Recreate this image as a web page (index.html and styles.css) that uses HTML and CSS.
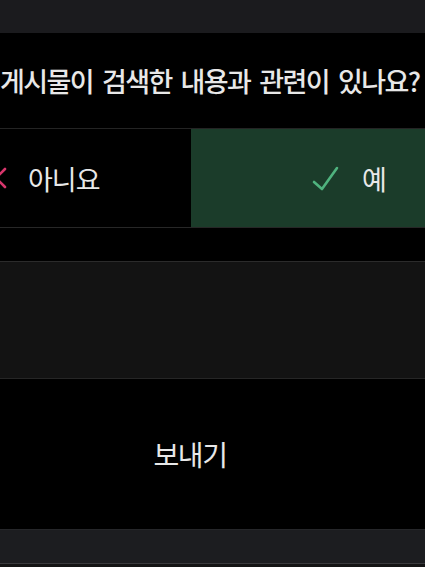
FILE: index.html
```html
<!DOCTYPE html>
<html lang="ko">
<head>
<meta charset="utf-8">
<title>피드백</title>
<link rel="stylesheet" href="styles.css">
</head>
<body>
<div class="screen">
  <div class="topbar"></div>
  <div class="question"><span>게시물이 검색한 내용과 관련이 있나요?</span></div>
  <div class="answers">
    <div class="answer no">
      <svg class="icon-x" width="22" height="22" viewBox="0 0 22 22" aria-hidden="true">
        <path d="M2 2 L20 20 M20 2 L2 20" stroke="#d7366c" stroke-width="2.6" stroke-linecap="round" fill="none"/>
      </svg>
      <span class="label">아니요</span>
    </div>
    <div class="answer yes">
      <svg class="icon-check" width="28" height="28" viewBox="0 0 28 28" aria-hidden="true">
        <path d="M3 18 L11 25 L26 4" stroke="#4fb37e" stroke-width="2.6" stroke-linecap="round" stroke-linejoin="round" fill="none"/>
      </svg>
      <span class="label">예</span>
    </div>
  </div>
  <div class="spacer"></div>
  <div class="panel"></div>
  <div class="send"><span>보내기</span></div>
  <div class="bottombar"></div>
  <div class="tail"></div>
</div>
</body>
</html>
```
FILE: styles.css
```css
html, body {
  margin: 0;
  padding: 0;
  background: #000;
}
body {
  font-family: "Noto Sans CJK KR", "Noto Sans", sans-serif;
  color: #e8e8e8;
  overflow: hidden;
}
.screen {
  width: 425px;
  height: 567px;
  overflow: hidden;
  display: flex;
  flex-direction: column;
}
.topbar {
  height: 33px;
  background: #1b1b1e;
  flex: none;
}
.question {
  height: 95px;
  flex: none;
  display: flex;
  align-items: center;
  white-space: nowrap;
  font-size: 27px;
  font-weight: 500;
  letter-spacing: -1.6px;
  word-spacing: 3px;
  border-bottom: 1px solid #242424;
}
.answers {
  height: 98px;
  flex: none;
  display: flex;
  border-bottom: 1px solid #272727;
}
.answer {
  display: flex;
  align-items: center;
  font-size: 27px;
  letter-spacing: -1px;
}
.answer.no {
  width: 191px;
  background: #000;
}
.answer.no .icon-x {
  margin-left: -15px;
  margin-right: 21px;
  flex: none;
}
.answer.yes {
  flex: 1;
  background: #1b3c2a;
  padding-left: 120px;
}
.answer.yes .icon-check {
  margin-right: 23px;
  flex: none;
}
.label {
  line-height: 1;
}
.spacer {
  height: 33px;
  flex: none;
}
.panel {
  height: 116px;
  flex: none;
  background: #131313;
  border-top: 1px solid #2b2b2b;
  border-bottom: 1px solid #262626;
}
.send {
  height: 150px;
  flex: none;
  display: flex;
  align-items: center;
  justify-content: center;
  padding-right: 45px;
  font-size: 28px;
  letter-spacing: -1.5px;
  border-bottom: 1px solid #26272a;
}
.bottombar {
  height: 33px;
  flex: none;
  background: #1c1d20;
  border-bottom: 1px solid #3a3a3d;
}
.tail {
  flex: 1;
  background: #141414;
}
```
